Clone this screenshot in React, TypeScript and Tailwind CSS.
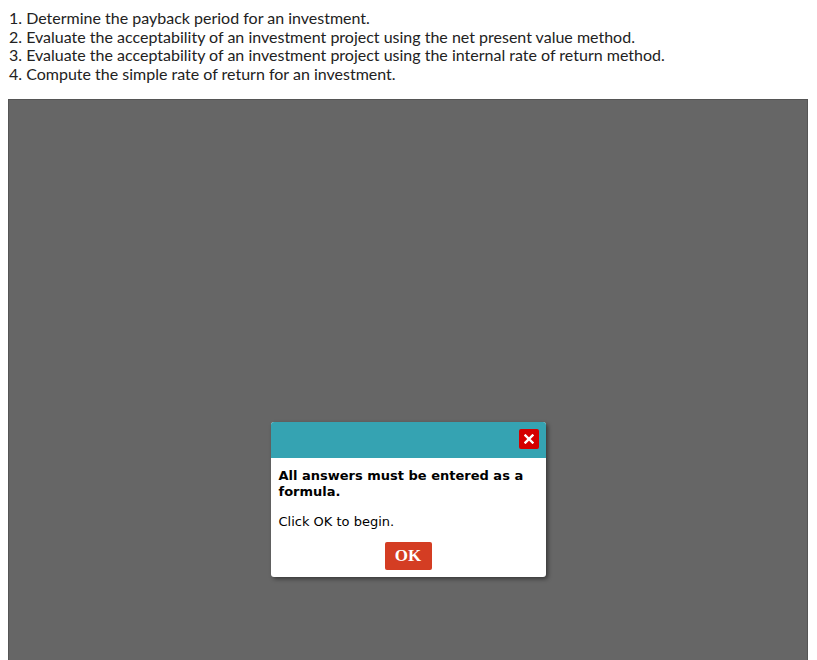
const objectives = [
  'Determine the payback period for an investment.',
  'Evaluate the acceptability of an investment project using the net present value method.',
  'Evaluate the acceptability of an investment project using the internal rate of return method.',
  'Compute the simple rate of return for an investment.',
];

function CloseIcon() {
  return (
    <svg viewBox="0 0 10 10" className="h-[10px] w-[10px]">
      <path d="M1.5 1.5 L8.5 8.5 M8.5 1.5 L1.5 8.5" stroke="white" strokeWidth="2.4" strokeLinecap="square" />
    </svg>
  );
}

export default function App() {
  return (
    <div className="h-[660px] overflow-hidden bg-white">
      <ol className="pl-[9px] pt-[9px] text-[16px] leading-[18.5px] text-[#222] font-['Lato','Open_Sans',sans-serif]">
        {objectives.map((text, i) => (
          <li key={i}>
            {i + 1}. {text}
          </li>
        ))}
      </ol>

      <div className="ml-[8px] mt-[16px] flex h-[600px] w-[800px] items-start justify-center border border-[#555] bg-[#666]">
        <div className="mt-[322px] w-[275px] overflow-hidden rounded-[3px] bg-white shadow-[2px_2px_4px_rgba(0,0,0,0.45)] font-['DejaVu_Sans','Verdana',sans-serif]">
          <div className="flex h-[36px] items-start justify-end bg-[#35a3b2] pr-[7px] pt-[7px]">
            <button className="flex h-[20px] w-[20px] items-center justify-center rounded-[2px] bg-[#d40000]">
              <CloseIcon />
            </button>
          </div>
          <div className="px-[8px] pt-[10px] pb-[7px]">
            <p className="text-[13px] font-bold leading-[16px] text-black">
              All answers must be entered as a formula.
            </p>
            <p className="mt-[14px] text-[13px] leading-[16px] text-black">Click OK to begin.</p>
            <div className="mt-[12px] flex justify-center">
              <button className="h-[28px] w-[47px] rounded-[2px] bg-[#d43d23] font-['Liberation_Serif',serif] text-[17px] font-bold text-white">
                OK
              </button>
            </div>
          </div>
        </div>
      </div>
    </div>
  );
}
